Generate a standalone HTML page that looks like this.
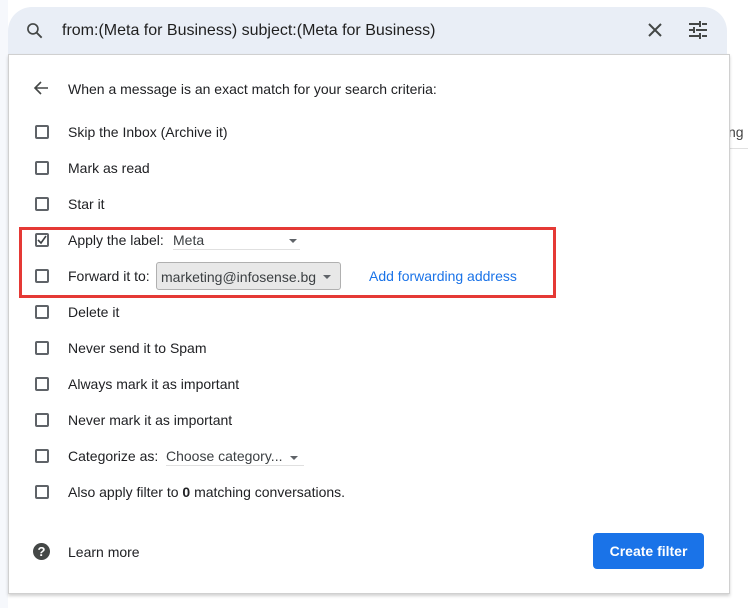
<!DOCTYPE html>
<html><head><meta charset="utf-8"><style>
*{box-sizing:border-box;margin:0;padding:0}
body{width:748px;height:608px;background:#fff;font-family:"Liberation Sans",Arial,sans-serif;color:#202124;position:relative;overflow:hidden;font-size:14px}
.strip{position:absolute;left:0;top:0;width:8px;height:608px;background:#f6f8fc}
.search{position:absolute;left:8px;top:7px;width:719px;height:47px;background:#e9eef6;border-radius:24px 24px 0 0}
.search .q{position:absolute;left:54px;top:15px;font-size:16px;color:#1f1f1f}
.panel{position:absolute;left:8px;top:54px;width:722px;height:540px;background:#fff;border:1px solid #d0d0d0;box-shadow:0 2px 3px rgba(0,0,0,.18)}
.row{position:absolute;left:60px;font-size:14px;color:#202124;line-height:16px;white-space:nowrap}
.cb{position:absolute;left:35px;width:14px;height:14px;border:2px solid #5f6368;border-radius:2px}
.dd{position:absolute;border-bottom:1px solid #e0e0e0;color:#3c4043}
.tri{position:absolute;width:0;height:0;border-left:4px solid transparent;border-right:4px solid transparent;border-top:4px solid #5f6368}
.red{position:absolute;left:19px;top:227px;width:537px;height:71px;border:3px solid #e53935}
.btn{position:absolute;left:593px;top:533px;width:111px;height:36px;background:#1a73e8;border-radius:4px;color:#fff;font-weight:bold;font-size:14px;text-align:center;line-height:36px}
</style></head><body>
<div class="strip"></div>
<div class="search">
<svg style="position:absolute;left:17px;top:14px" width="20" height="20" viewBox="0 0 24 24"><circle cx="9.5" cy="9.5" r="6" fill="none" stroke="#444746" stroke-width="2"/><path d="M14 14l6 6" stroke="#444746" stroke-width="2.2"/></svg>
<div class="q">from:(Meta for Business) subject:(Meta for Business)</div>
<svg style="position:absolute;left:639px;top:15px" width="16" height="16" viewBox="0 0 16 16"><path d="M2 2l12 12M14 2L2 14" stroke="#444746" stroke-width="2"/></svg>
<svg style="position:absolute;left:680px;top:13px" width="20" height="20" viewBox="0 0 20 20" stroke="#444746" stroke-width="2"><path d="M1 4h10M14 4h5M12 1v6M1 10h4M8 10h11M6 7v6M1 16h10M14 16h5M12 13v6"/></svg>
</div>
<div style="position:absolute;left:728px;top:124px;font-size:14px;color:#444;white-space:nowrap">ng r</div>
<div style="position:absolute;left:730px;top:148px;width:18px;height:1px;background:#e0e0e0"></div>
<div class="panel"></div>
<svg style="position:absolute;left:33px;top:80px" width="16" height="16" viewBox="0 0 16 16"><path d="M15 8H2M8 2L2 8l6 6" fill="none" stroke="#444746" stroke-width="1.6"/></svg>
<div class="row" style="left:68px;top:81px;font-size:14px">When a message is an exact match for your search criteria:</div>

<div class="cb" style="top:125px"></div><div class="row" style="left:68px;top:124px">Skip the Inbox (Archive it)</div>
<div class="cb" style="top:161px"></div><div class="row" style="left:68px;top:160px">Mark as read</div>
<div class="cb" style="top:197px"></div><div class="row" style="left:68px;top:196px">Star it</div>
<div class="cb" style="top:233px"></div>
<svg style="position:absolute;left:37px;top:235px" width="10" height="10" viewBox="0 0 10 10"><path d="M1 5l3 3 5-7" fill="none" stroke="#3c4043" stroke-width="1.6"/></svg>
<div class="row" style="left:68px;top:232px">Apply the label:</div>
<div class="dd" style="left:173px;top:232px;width:127px;height:18px">Meta</div><div class="tri" style="left:289px;top:239px"></div>
<div class="cb" style="top:269px"></div><div class="row" style="left:68px;top:268px">Forward it to:</div>
<div style="position:absolute;left:156px;top:262px;width:185px;height:28px;background:#e8e8e8;border:1px solid #b0b0b0;border-radius:3px;padding:6px 0 0 4px;color:#3c4043;font-size:14px">marketing@infosense.bg</div><div class="tri" style="left:323px;top:275px"></div>
<div class="row" style="left:369px;top:268px;color:#1a73e8">Add forwarding address</div>
<div class="red"></div>
<div class="cb" style="top:305px"></div><div class="row" style="left:68px;top:304px">Delete it</div>
<div class="cb" style="top:341px"></div><div class="row" style="left:68px;top:340px">Never send it to Spam</div>
<div class="cb" style="top:377px"></div><div class="row" style="left:68px;top:376px">Always mark it as important</div>
<div class="cb" style="top:413px"></div><div class="row" style="left:68px;top:412px">Never mark it as important</div>
<div class="cb" style="top:449px"></div><div class="row" style="left:68px;top:448px">Categorize as:</div>
<div class="dd" style="left:166px;top:448px;width:138px;height:18px">Choose category...</div><div class="tri" style="left:290px;top:456px"></div>
<div class="cb" style="top:485px"></div><div class="row" style="left:68px;top:484px">Also apply filter to <b>0</b> matching conversations.</div>
<div style="position:absolute;left:33px;top:543px;width:17px;height:17px;border-radius:50%;background:#444746;color:#fff;font-weight:bold;font-size:13px;text-align:center;line-height:17px">?</div>
<div class="row" style="left:68px;top:544px">Learn more</div>
<div class="btn">Create filter</div>
</body></html>
